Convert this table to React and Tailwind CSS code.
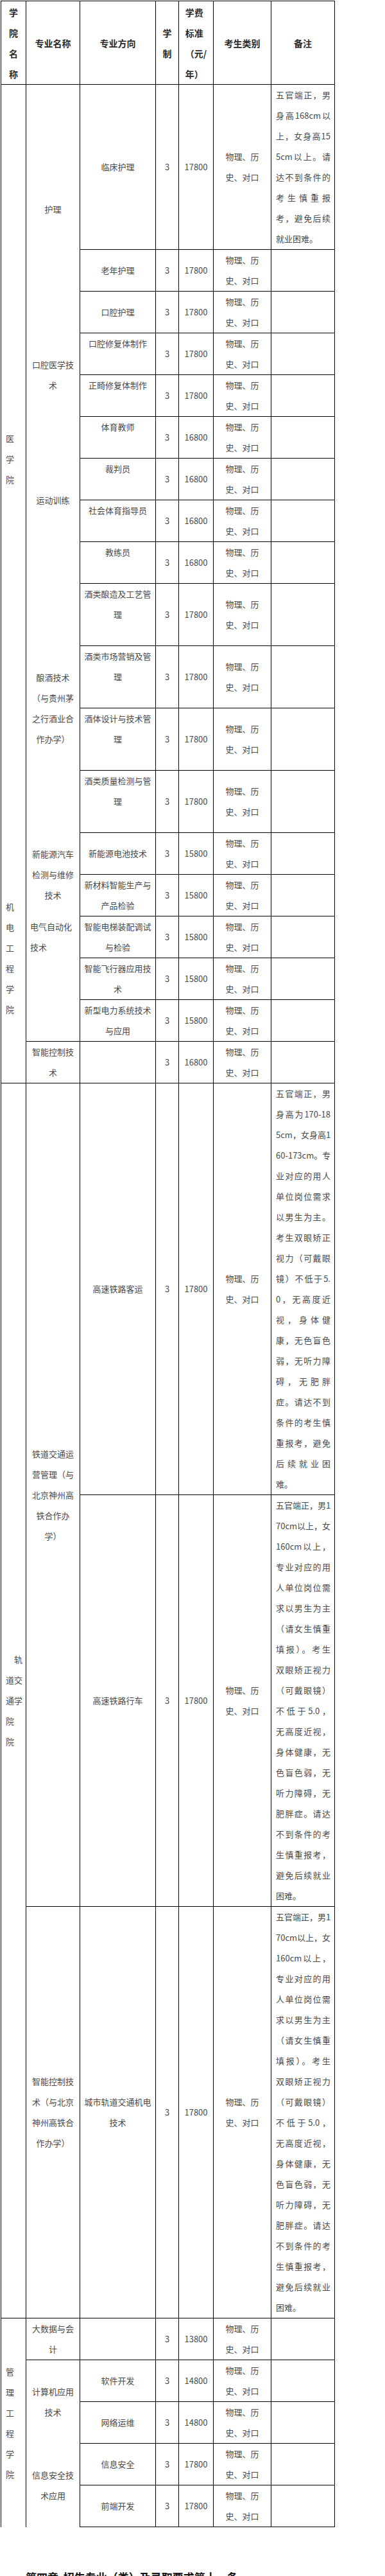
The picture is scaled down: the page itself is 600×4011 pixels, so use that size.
import React from "react";

const SPAN = {
  1: "",
  2: "row-span-2",
  3: "row-span-3",
  4: "row-span-4",
  5: "row-span-5",
  6: "row-span-6",
  13: "row-span-13",
};

const NOTE_NURSE = [
  "五官端正，男",
  "身高168cm以",
  "上，女身高15",
  "5cm以上。请",
  "达不到条件的",
  "考生慎重报",
  "考，避免后续",
  "就业困难。",
];

const NOTE_PASSENGER = [
  "五官端正，男",
  "身高为170-18",
  "5cm，女身高1",
  "60-173cm。专",
  "业对应的用人",
  "单位岗位需求",
  "以男生为主。",
  "考生双眼矫正",
  "视力（可戴眼",
  "镜）不低于5.",
  "0，无高度近",
  "视，身体健",
  "康，无色盲色",
  "弱，无听力障",
  "碍，无肥胖",
  "症。请达不到",
  "条件的考生慎",
  "重报考，避免",
  "后续就业困",
  "难。",
];

const NOTE_RAIL = [
  "五官端正，男1",
  "70cm以上，女",
  "160cm以上，",
  "专业对应的用",
  "人单位岗位需",
  "求以男生为主",
  "（请女生慎重",
  "填报）。考生",
  "双眼矫正视力",
  "（可戴眼镜）",
  "不低于5.0，",
  "无高度近视，",
  "身体健康，无",
  "色盲色弱，无",
  "听力障碍，无",
  "肥胖症。请达",
  "不到条件的考",
  "生慎重报考，",
  "避免后续就业",
  "困难。",
];

const college = (lines, span, nb) => ({ kind: "college", lines, span, nb });
const major = (lines, span = 1, opts = {}) => ({ kind: "major", lines, span, ...opts });
const dir = (lines, top) => ({ kind: "dir", lines, top });
const note = (lines) => ({ kind: "note", lines });
const tail = (fee, n) => [
  { kind: "num", lines: ["3"] },
  { kind: "num", lines: [fee] },
  { kind: "num", lines: ["物理、历", "史、对口"] },
  n || { kind: "note", lines: [] },
];

const cells = [
  // 医学院
  college(["医", "学", "院"], 13, true),
  major(["护理"], 3, { nb: true }),
  dir(["临床护理"]),
  ...tail("17800", note(NOTE_NURSE)),
  dir(["老年护理"]),
  ...tail("17800"),
  dir(["口腔护理"]),
  ...tail("17800"),
  major(["口腔医学技", "术"], 2, { nb: true }),
  dir(["口腔修复体制作"], true),
  ...tail("17800"),
  dir(["正畸修复体制作"], true),
  ...tail("17800"),
  major(["运动训练"], 4, { nb: true }),
  dir(["体育教师"], true),
  ...tail("16800"),
  dir(["裁判员"], true),
  ...tail("16800"),
  dir(["社会体育指导员"], true),
  ...tail("16800"),
  dir(["教练员"], true),
  ...tail("16800"),
  major(["酿酒技术", "（与贵州茅", "之行酒业合", "作办学）"], 4, { nb: true }),
  dir(["酒类酿造及工艺管", "理"], true),
  ...tail("17800"),
  dir(["酒类市场营销及管", "理"], true),
  ...tail("17800"),
  dir(["酒体设计与技术管", "理"], true),
  ...tail("17800"),
  dir(["酒类质量检测与管", "理"], true),
  ...tail("17800"),

  // 机电工程学院
  college(["机", "电", "工", "程", "学", "院"], 6),
  major(["新能源汽车", "检测与维修", "技术"], 2, { nb: true }),
  dir(["新能源电池技术"]),
  ...tail("15800"),
  dir(["新材料智能生产与", "产品检验"]),
  ...tail("15800"),
  major(["电气自动化", "技术"], 3, { top: true, left: true }),
  dir(["智能电梯装配调试", "与检验"]),
  ...tail("15800"),
  dir(["智能飞行器应用技", "术"]),
  ...tail("15800"),
  dir(["新型电力系统技术", "与应用"]),
  ...tail("15800"),
  major(["智能控制技", "术"]),
  dir([]),
  ...tail("16800"),

  // 轨道交通学院
  college(["\u3000轨", "道交", "通学", "院", "院"], 3),
  major(["铁道交通运", "营管理（与", "北京神州高", "铁合作办", "学）"], 2),
  dir(["高速铁路客运"]),
  ...tail("17800", note(NOTE_PASSENGER)),
  dir(["高速铁路行车"]),
  ...tail("17800", note(NOTE_RAIL)),
  major(["智能控制技", "术（与北京", "神州高铁合", "作办学）"]),
  dir(["城市轨道交通机电", "技术"]),
  ...tail("17800", note(NOTE_RAIL)),

  // 管理工程学院
  college(["管", "理", "工", "程", "学", "院"], 5, true),
  major(["大数据与会", "计"]),
  dir([]),
  ...tail("13800"),
  major(["计算机应用", "技术"], 2, { nb: true }),
  dir(["软件开发"]),
  ...tail("14800"),
  dir(["网络运维"]),
  ...tail("14800"),
  major(["信息安全技", "术应用"], 2, { nb: true }),
  dir(["信息安全"]),
  ...tail("17800"),
  dir(["前端开发"]),
  ...tail("17800"),
];

function Cell({ c }) {
  const span = SPAN[c.span || 1];
  const bottom = c.nb ? "" : "border-b";

  let layout = "items-center justify-center";
  if (c.kind === "college") layout = "items-start justify-center pl-[7px]";
  if (c.kind === "major") {
    layout = `${c.left ? "items-start pl-[6px]" : "items-center"} ${c.top ? "justify-start" : "justify-center"}`;
  }
  if (c.kind === "dir") layout = `items-center ${c.top ? "justify-start" : "justify-center"}`;
  if (c.kind === "note") layout = "items-stretch justify-start pl-[7px] pr-[6px]";

  return (
    <div className={`${span} ${bottom} border-r border-black flex flex-col ${layout}`}>
      {c.lines.map((line, i) => {
        if (c.kind === "note") {
          const last = i === c.lines.length - 1;
          return (
            <div
              key={i}
              className={last ? "whitespace-nowrap text-left" : "whitespace-nowrap text-justify [text-align-last:justify]"}
            >
              {line}
            </div>
          );
        }
        return (
          <div key={i} className="whitespace-nowrap">
            {line}
          </div>
        );
      })}
    </div>
  );
}

function Head({ lines, left }) {
  return (
    <div className="border-r border-b border-black flex flex-col items-center justify-center">
      <div className={left ? "text-left" : "text-center"}>
        {lines.map((l, i) => (
          <div key={i} className="whitespace-nowrap">
            {l}
          </div>
        ))}
      </div>
    </div>
  );
}

export default function App() {
  return (
    <div className="min-h-screen bg-white font-['Noto_Sans_CJK_SC','Noto_Sans',sans-serif]">
      <div className="w-[521px] ml-px mt-px grid grid-cols-[39px_84px_118px_36px_54px_90px_99px] grid-rows-[130px_257px_repeat(8,65px)_repeat(4,97px)_repeat(6,65px)_repeat(3,641px)_repeat(5,65px)] border-l border-t border-black text-[13px] leading-[32px] text-[#4a4a4a]">
        <div className="contents font-bold text-[14px] text-[#2a2a2a]">
          <Head lines={["学", "院", "名", "称"]} />
          <Head lines={["专业名称"]} />
          <Head lines={["专业方向"]} />
          <Head lines={["学", "制"]} />
          <Head lines={["学费", "标准", "（元/", "年）"]} left />
          <Head lines={["考生类别"]} />
          <Head lines={["备注"]} />
        </div>
        {cells.map((c, i) => (
          <Cell key={i} c={c} />
        ))}
      </div>
      <p className="mt-[66px] pl-[40px] text-[17px] font-bold text-[#111] leading-[24px] whitespace-nowrap">
        第四章&nbsp;&nbsp;招生专业（类）及录取要求第十一条
      </p>
    </div>
  );
}
